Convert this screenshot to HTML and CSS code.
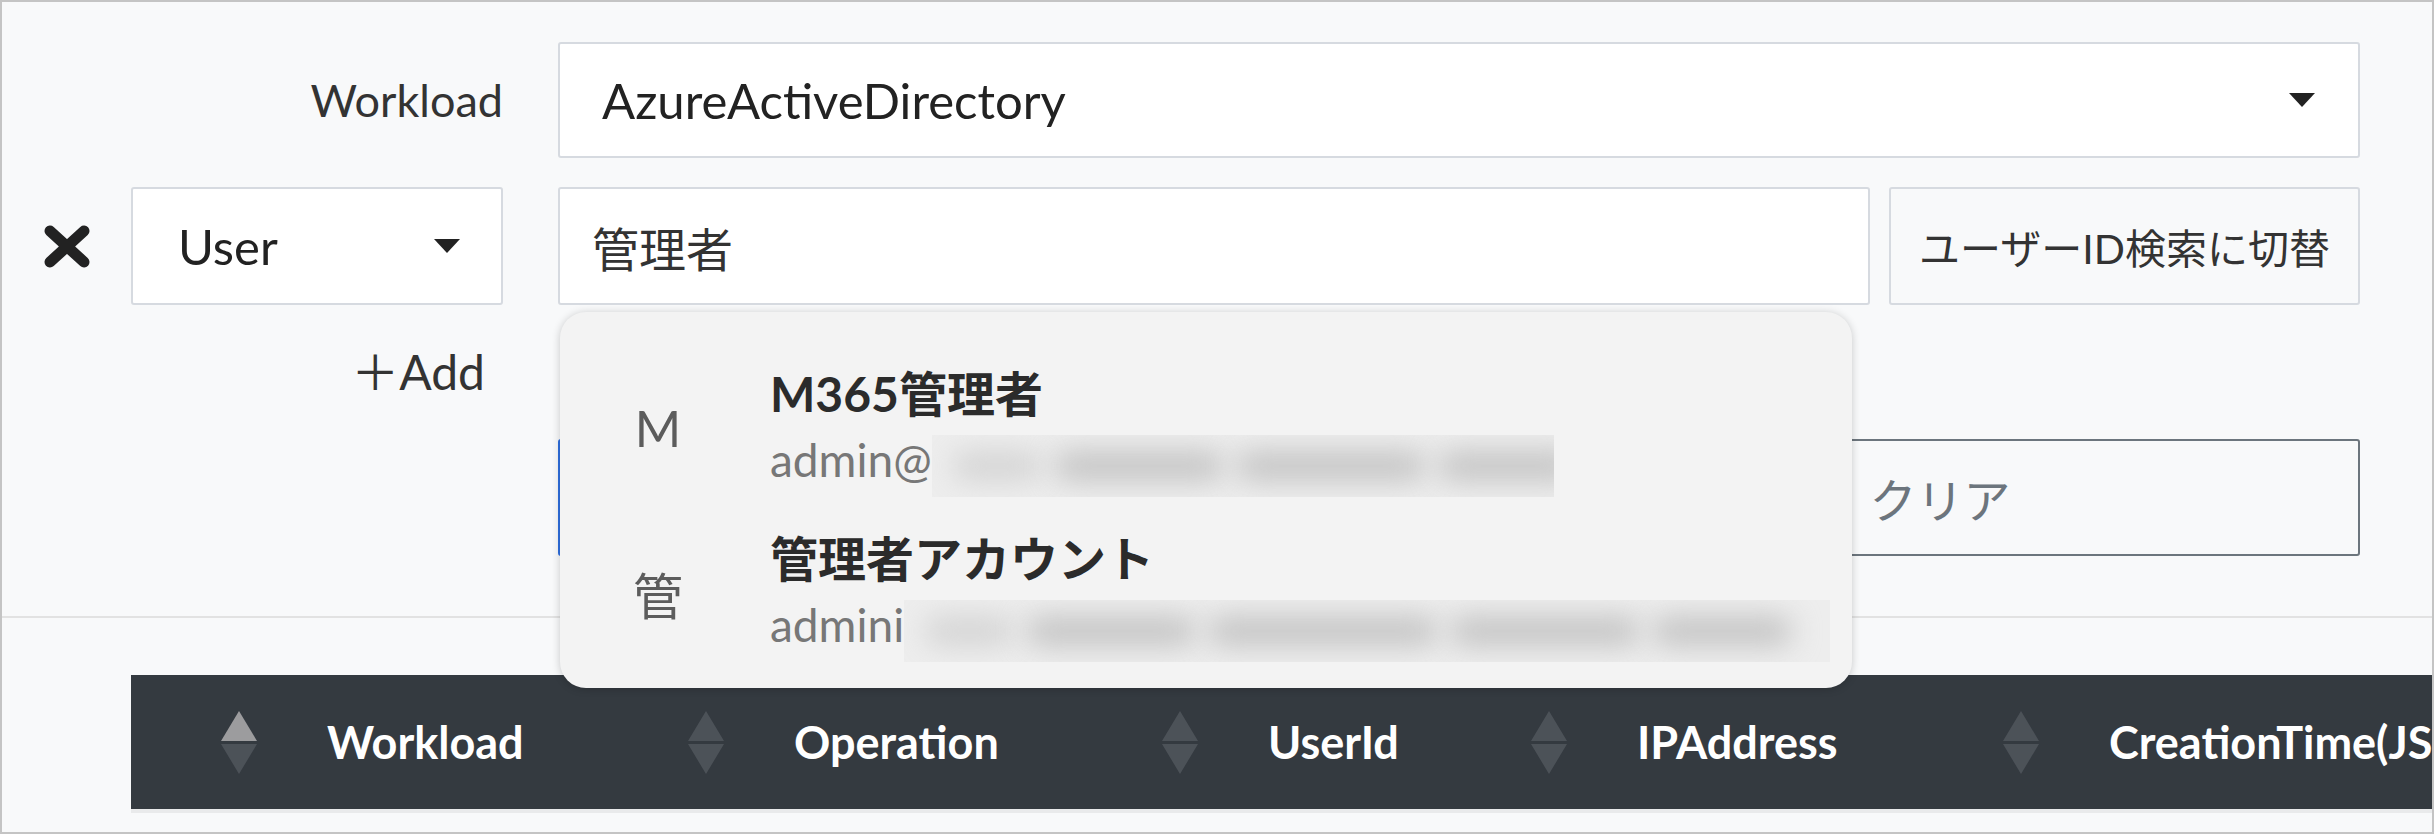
FILE: index.html
```html
<!DOCTYPE html>
<html lang="ja">
<head>
<meta charset="UTF-8" />
<meta name="viewport" content="width=device-width, initial-scale=1" />
<title>監査ログ検索</title>
<link rel="stylesheet" href="styles.css">
</head>
<body>

<div class="frame">
  <div class="filters">
    <div class="row row-workload">
      <div></div>
      <label class="label">Workload</label>
      <div class="select main"><span>AzureActiveDirectory</span><i class="caret"></i></div>
    </div>

    <div class="row row-user">
      <button class="remove" title="削除">
        <svg viewBox="0 0 46 43" width="46" height="43">
          <path d="M6 6 L40 37 M40 6 L6 37" stroke="#222" stroke-width="11" stroke-linecap="round" fill="none"/>
        </svg>
      </button>
      <div class="select select-user"><span>User</span><i class="caret"></i></div>
      <div class="search main">
        <div class="input">管理者</div>
        <button class="toggle">ユーザーID検索に切替</button>

        <div class="suggest">
          <div class="item">
            <div class="avatar">M</div>
            <div class="info">
              <div class="name">M365管理者</div>
              <div class="mail">admin@<span class="masked mask-1"><i class="b1"></i><i class="b2"></i><i class="b3"></i><i class="b4"></i></span></div>
            </div>
          </div>
          <div class="item">
            <div class="avatar">管</div>
            <div class="info">
              <div class="name">管理者アカウント</div>
              <div class="mail">admini<span class="masked mask-2"><i class="b1"></i><i class="b2"></i><i class="b5"></i><i class="b3"></i><i class="b4"></i></span></div>
            </div>
          </div>
        </div>
      </div>
    </div>

    <div class="row row-add">
      <div></div>
      <a class="add">＋Add</a>
    </div>

    <div class="row row-actions">
      <div></div>
      <div></div>
      <div class="actions main">
        <button class="btn btn-search">検索</button>
        <button class="btn btn-clear">クリア</button>
      </div>
    </div>
  </div>

  <div class="divider"></div>

  <div class="table">
    <div class="thead">
      <div class="th"><span class="sort asc"><i class="up"></i><i class="down"></i></span>Workload</div>
      <div class="th"><span class="sort"><i class="up"></i><i class="down"></i></span>Operation</div>
      <div class="th"><span class="sort"><i class="up"></i><i class="down"></i></span>UserId</div>
      <div class="th"><span class="sort"><i class="up"></i><i class="down"></i></span>IPAddress</div>
      <div class="th"><span class="sort"><i class="up"></i><i class="down"></i></span>CreationTime(JST)</div>
    </div>
    <div class="thead-edge"></div>
  </div>
</div>

</body>
</html>
```

FILE: styles.css
```css
body {
  margin: 0;
  font-family: Lato, "Noto Sans CJK JP", sans-serif;
  color: #222;
}
.frame {
  position: relative;
  width: 2434px;
  height: 834px;
  box-sizing: border-box;
  border: 2px solid #c4c4c4;
  background: #f8f9fa;
  overflow: hidden;
}
.filters {
  padding: 40px 72px 0 0;
}
.row {
  display: grid;
  grid-template-columns: 129px 372px 1fr;
  align-items: center;
}
.main {
  margin-left: 55px;
}
.row-workload {
  height: 116px;
  margin-bottom: 29px;
}
.row-user {
  height: 118px;
}
.row-add {
  height: 134px;
  align-items: start;
}
.row-actions {
  height: 117px;
}
.label {
  text-align: right;
  font-size: 45px;
  color: #333;
}
.select {
  height: 100%;
  box-sizing: border-box;
  display: flex;
  align-items: center;
  justify-content: space-between;
  padding: 0 43px 0 42px;
  background: #fff;
  border: 2px solid #d6dae0;
  border-radius: 3px;
  font-size: 49px;
}
.select-user {
  padding-left: 45px;
  padding-right: 41px;
}
.caret {
  width: 0;
  height: 0;
  border-left: 13px solid transparent;
  border-right: 13px solid transparent;
  border-top: 14px solid #222;
}
.remove {
  justify-self: center;
  background: none;
  border: none;
  padding: 0;
  display: flex;
}
.search {
  position: relative;
  height: 100%;
  display: flex;
  gap: 19px;
}
.input {
  flex: 1;
  box-sizing: border-box;
  display: flex;
  align-items: center;
  padding-left: 32px;
  background: #fff;
  border: 2px solid #d6dae0;
  border-radius: 3px;
  font-size: 47px;
  color: #333;
}
.toggle {
  width: 471px;
  box-sizing: border-box;
  background: #f8f9fa;
  border: 2px solid #d6dae0;
  border-radius: 3px;
  font-family: inherit;
  font-size: 41px;
  color: #333;
  padding: 0;
}
.add {
  grid-column: 2;
  justify-self: end;
  margin: 32px 18px 0 0;
  font-size: 48px;
  line-height: 69px;
  color: #333;
}
.actions {
  height: 100%;
  display: flex;
  gap: 20px;
}
.btn {
  box-sizing: border-box;
  font-family: inherit;
  font-size: 47px;
  background: transparent;
  border-radius: 3px;
  padding: 0;
}
.btn-search {
  flex: 1;
  border: 2px solid #2f6fe0;
  color: #2f6fe0;
}
.btn-clear {
  width: 840px;
  border: 2px solid #6c757d;
  color: #6c757d;
}

/* サジェスト */
.suggest {
  position: absolute;
  top: 125px;
  left: 2px;
  width: 1292px;
  height: 376px;
  box-sizing: border-box;
  padding: 53px 0 0 50px;
  background: #f3f3f3;
  border-radius: 26px;
  box-shadow: 0 1px 8px rgba(0, 0, 0, 0.2);
  z-index: 10;
}
.item {
  display: flex;
  align-items: center;
  gap: 64px;
  height: 126px;
  margin-bottom: 39px;
}
.avatar {
  width: 96px;
  text-align: center;
  font-size: 50px;
  color: #5c5c5c;
}
.name {
  font-size: 48px;
  font-weight: 700;
  line-height: 57px;
  color: #2b2b2b;
}
.mail {
  display: flex;
  align-items: flex-start;
  height: 62px;
  margin-top: 7px;
  font-size: 46px;
  line-height: 62px;
  color: #777;
}

/* 伏せ字（ぼかし） */
.masked {
  display: flex;
  align-items: center;
  gap: 12px;
  height: 62px;
  margin-top: 6px;
  padding-left: 20px;
  box-sizing: border-box;
  overflow: hidden;
  background: #ededed;
}
.masked i {
  flex: none;
  height: 30px;
  border-radius: 15px;
  background: #c4c4c4;
  filter: blur(14px);
}
.masked .b1 { width: 90px; opacity: 0.6; }
.masked .b2 { width: 170px; }
.masked .b3 { width: 190px; }
.masked .b4 { width: 140px; }
.masked .b5 { width: 230px; }
.mask-1 {
  width: 622px;
}
.mask-2 {
  width: 926px;
}

.divider {
  margin-top: 60px;
  border-top: 2px solid #e2e2e2;
}

/* テーブル */
.table {
  margin: 57px 0 0 129px;
  width: max-content;
}
.thead {
  display: grid;
  grid-template-columns: 467px 474px 369px 472px 560px;
  height: 134px;
  background: #343a40;
}
.th {
  display: flex;
  align-items: center;
  gap: 70px;
  padding-left: 90px;
  color: #fff;
  font-size: 45px;
  font-weight: 700;
  white-space: nowrap;
}
.sort {
  display: flex;
  flex-direction: column;
  gap: 3px;
}
.sort i {
  width: 0;
  height: 0;
  border-left: 18px solid transparent;
  border-right: 18px solid transparent;
}
.sort .up {
  border-bottom: 30px solid #4c5258;
}
.sort .down {
  border-top: 30px solid #4c5258;
}
.sort.asc .up {
  border-bottom-color: #9c9c9e;
}
.thead-edge {
  height: 4px;
  background: #e9eaeb;
}
```
